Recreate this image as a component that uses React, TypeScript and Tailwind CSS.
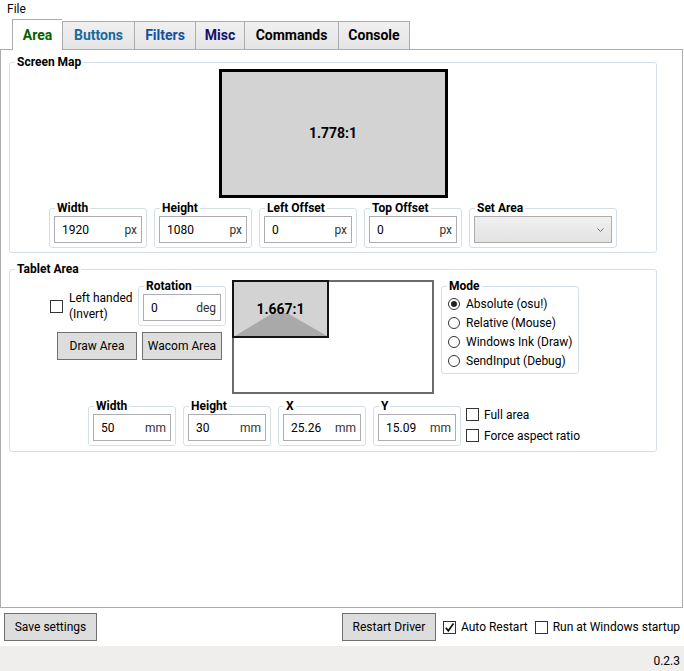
import React from "react";

function GroupBox({
  title,
  className,
  children,
}: {
  title: string;
  className?: string;
  children?: React.ReactNode;
}) {
  return (
    <div className={"relative rounded-[3px] border border-[#d5dfe5] " + (className ?? "")}>
      <span className="absolute -top-[8px] left-[5px] whitespace-nowrap bg-white px-[2px] text-[12px] font-bold leading-[14px] text-black">
        {title}
      </span>
      {children}
    </div>
  );
}

function Field({
  title,
  value,
  unit,
  small,
}: {
  title: string;
  value: string;
  unit: string;
  small?: boolean;
}) {
  return (
    <GroupBox title={title} className="px-[4px] pb-[4px] pt-[7px]">
      <div
        className={
          "flex h-[27px] items-center justify-between border border-[#abadb3] bg-white pl-[7px] pr-[4px] text-[12px] " +
          (small ? "w-[78px]" : "w-[88px]")
        }
      >
        <span>{value}</span>
        <span className="text-[#333]">{unit}</span>
      </div>
    </GroupBox>
  );
}

function Check({ checked }: { checked?: boolean }) {
  return (
    <span className="flex h-[13px] w-[13px] shrink-0 items-center justify-center border border-[#333] bg-white">
      {checked && (
        <svg width="11" height="11" viewBox="0 0 11 11">
          <path d="M1.8 5.8 L4.3 8.8 L9.5 1.5" fill="none" stroke="#111" strokeWidth="1.7" />
        </svg>
      )}
    </span>
  );
}

function Radio({ label, on }: { label: string; on?: boolean }) {
  return (
    <div className="flex h-[19px] items-center whitespace-nowrap">
      <span className="flex h-[12px] w-[12px] shrink-0 items-center justify-center rounded-full border border-[#333] bg-white">
        {on && <span className="h-[6px] w-[6px] rounded-full bg-[#222]" />}
      </span>
      <span className="ml-[6px] text-[12px]">{label}</span>
    </div>
  );
}

function Btn({ className, children }: { className: string; children: React.ReactNode }) {
  return (
    <div
      className={
        "flex h-[28px] shrink-0 items-center justify-center whitespace-nowrap border border-[#707070] bg-[#dddddd] text-[12px] " +
        className
      }
    >
      {children}
    </div>
  );
}

export default function App() {
  return (
    <div className="flex h-[671px] w-[684px] flex-col overflow-hidden bg-white font-['Segoe_UI','Roboto',sans-serif] text-black">
      <div className="h-[19px] pl-[7px] text-[12px] leading-[19px]">File</div>

      {/* tabs */}
      <div className="flex h-[30px] items-end pl-[12px] text-[14px] font-bold">
        <div className="relative z-10 -mb-px flex h-[31px] w-[50px] items-center justify-center border-l border-t border-[#acacac] bg-white text-[#006400]">
          Area
        </div>
        <div className="flex h-[28px] w-[72px] items-center justify-center border-l border-t border-[#acacac] bg-gradient-to-b from-[#f0f0f0] to-[#e5e5e5] text-[#1a6a9e]">
          Buttons
        </div>
        <div className="flex h-[28px] w-[61px] items-center justify-center border-l border-t border-[#acacac] bg-gradient-to-b from-[#f0f0f0] to-[#e5e5e5] text-[#1450a0]">
          Filters
        </div>
        <div className="flex h-[28px] w-[49px] items-center justify-center border-l border-t border-[#acacac] bg-gradient-to-b from-[#f0f0f0] to-[#e5e5e5] text-[#10106e]">
          Misc
        </div>
        <div className="flex h-[28px] w-[94px] items-center justify-center border-l border-t border-[#acacac] bg-gradient-to-b from-[#f0f0f0] to-[#e5e5e5]">
          Commands
        </div>
        <div className="flex h-[28px] w-[72px] items-center justify-center border-x border-t border-[#acacac] bg-gradient-to-b from-[#f0f0f0] to-[#e5e5e5]">
          Console
        </div>
      </div>

      {/* tab content */}
      <div className="h-[559px] w-[683px] shrink-0 border border-[#acacac] bg-white pl-[8px]">
        <GroupBox title="Screen Map" className="mt-[12px] h-[191px] w-[648px]">
          <div className="flex justify-center pt-[6px]">
            <div className="flex h-[129px] w-[229px] items-center justify-center border-[3px] border-black bg-[#d3d3d3] text-[14px] font-bold">
              1.778:1
            </div>
          </div>
          <div className="mt-[10px] flex justify-center gap-[7px]">
            <Field title="Width" value="1920" unit="px" />
            <Field title="Height" value="1080" unit="px" />
            <Field title="Left Offset" value="0" unit="px" />
            <Field title="Top Offset" value="0" unit="px" />
            <GroupBox title="Set Area" className="px-[4px] pb-[4px] pt-[7px]">
              <div className="flex h-[27px] w-[138px] items-center justify-end border border-[#acacac] bg-gradient-to-b from-[#f0f0f0] to-[#e3e3e3] pr-[7px]">
                <svg width="7" height="4" viewBox="0 0 7 4">
                  <path d="M0.5 0.5 L3.5 3.5 L6.5 0.5" fill="none" stroke="#707070" strokeWidth="1" />
                </svg>
              </div>
            </GroupBox>
          </div>
        </GroupBox>

        <GroupBox title="Tablet Area" className="mt-[16px] h-[183px] w-[648px]">
          <div className="flex items-start pl-[40px] pt-[10px]">
            <div className="mt-[6px] flex w-[176px] flex-col">
              <div className="flex items-center">
                <div className="flex w-[88px] items-center">
                  <Check />
                  <div className="ml-[6px] whitespace-nowrap text-[12px] leading-[16px]">
                    Left handed
                    <br />
                    (Invert)
                  </div>
                </div>
                <Field title="Rotation" value="0" unit="deg" small />
              </div>
              <div className="ml-[7px] mt-[6px] flex gap-[5px]">
                <Btn className="w-[80px]">Draw Area</Btn>
                <Btn className="w-[80px]">Wacom Area</Btn>
              </div>
            </div>

            <div className="relative ml-[6px] h-[114px] w-[202px] shrink-0 border-2 border-[#6b6b6b] bg-white">
              <div className="absolute -left-[2px] -top-[2px] h-[58px] w-[97px] border-2 border-[#141414] bg-[#d3d3d3]">
                <svg className="absolute inset-0" width="93" height="54" viewBox="0 0 93 54">
                  <polygon points="1,54 39,31 53,31 93,54" fill="#a9a9a9" />
                </svg>
                <div className="relative flex h-full items-center justify-center text-[14px] font-bold">1.667:1</div>
              </div>
            </div>

            <GroupBox title="Mode" className="ml-[7px] mt-[6px] h-[88px] w-[138px] shrink-0 pl-[6px] pt-[7px]">
              <Radio label="Absolute (osu!)" on />
              <Radio label="Relative (Mouse)" />
              <Radio label="Windows Ink (Draw)" />
              <Radio label="SendInput (Debug)" />
            </GroupBox>
          </div>

          <div className="ml-[78px] mt-[12px] flex items-start">
            <div className="flex gap-[7px]">
              <Field title="Width" value="50" unit="mm" small />
              <Field title="Height" value="30" unit="mm" small />
              <Field title="X" value="25.26" unit="mm" small />
              <Field title="Y" value="15.09" unit="mm" small />
            </div>
            <div className="-mt-[2px] ml-[5px] flex flex-col whitespace-nowrap">
              <div className="flex h-[21px] items-center">
                <Check />
                <span className="ml-[5px] text-[12px]">Full area</span>
              </div>
              <div className="flex h-[21px] items-center">
                <Check />
                <span className="ml-[5px] text-[12px]">Force aspect ratio</span>
              </div>
            </div>
          </div>
        </GroupBox>
      </div>

      {/* bottom buttons */}
      <div className="flex h-[38px] shrink-0 items-start whitespace-nowrap px-[4px] pt-[5px]">
        <Btn className="w-[93px]">Save settings</Btn>
        <div className="ml-auto flex items-center">
          <Btn className="w-[94px]">Restart Driver</Btn>
          <span className="ml-[7px]">
            <Check checked />
          </span>
          <span className="ml-[5px] text-[12px]">Auto Restart</span>
          <span className="ml-[7px]">
            <Check />
          </span>
          <span className="ml-[5px] text-[12px]">Run at Windows startup</span>
        </div>
      </div>

      {/* status bar */}
      <div className="flex h-[25px] shrink-0 items-center justify-end bg-[#f0eeed] pr-[4px] pt-[4px] text-[12px]">
        0.2.3
      </div>
    </div>
  );
}
